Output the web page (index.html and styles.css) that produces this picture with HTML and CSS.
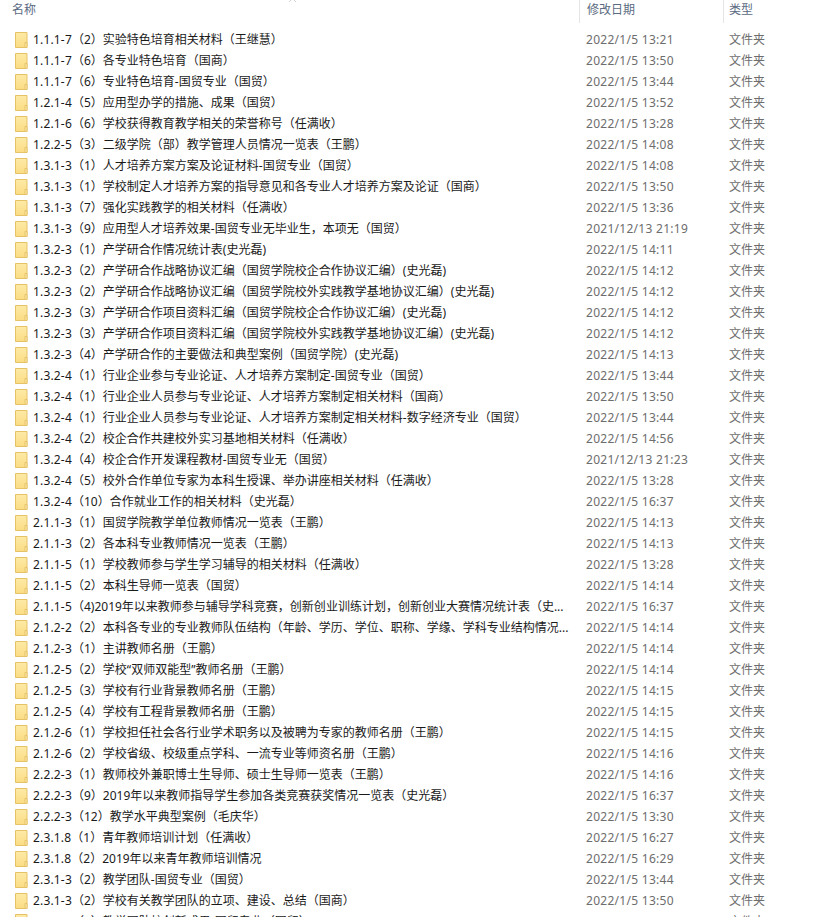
FILE: index.html
```html
<!DOCTYPE html>
<html lang="zh-CN">
<head>
<meta charset="utf-8">
<title>文件列表</title>
<link rel="stylesheet" href="styles.css">
</head>
<body>
<div class="header">
  <div class="col name">名称<svg class="sort" width="9" height="2" viewBox="0 0 9 2"><path d="M1 2L3 0M8 2L6 0" fill="none" stroke="#d0d0d0"/></svg></div>
  <div class="col date">修改日期</div>
  <div class="col type">类型</div>
</div>
<svg width="0" height="0" class="defs"><defs>
  <linearGradient id="fg" x1="0" y1="0" x2="0" y2="1"><stop offset="0" stop-color="#fdeaa6"/><stop offset="1" stop-color="#fbdc84"/></linearGradient>
  <symbol id="folder" viewBox="0 0 13 16">
    <path d="M0.5 0.5H12V15.5H0.5Z" fill="url(#fg)" stroke="#e6c267"/>
    <path d="M10 10.5H12V15.5H10Z" fill="#fdecb0" stroke="#e6c267"/>
  </symbol>
</defs></svg>
<div class="list" id="list"></div>
<script src="rows.js"></script>
</body>
</html>
```
FILE: rows.js
```js
const rows = [
["1.1.1-7","（2）实验特色培育相关材料（王继慧）","2022/1/5 13:21"],
["1.1.1-7","（6）各专业特色培育（国商）","2022/1/5 13:50"],
["1.1.1-7","（6）专业特色培育-国贸专业（国贸）","2022/1/5 13:44"],
["1.2.1-4","（5）应用型办学的措施、成果（国贸）","2022/1/5 13:52"],
["1.2.1-6","（6）学校获得教育教学相关的荣誉称号（任满收）","2022/1/5 13:28"],
["1.2.2-5","（3）二级学院（部）教学管理人员情况一览表（王鹏）","2022/1/5 14:08"],
["1.3.1-3","（1）人才培养方案方案及论证材料-国贸专业（国贸）","2022/1/5 14:08"],
["1.3.1-3","（1）学校制定人才培养方案的指导意见和各专业人才培养方案及论证（国商）","2022/1/5 13:50"],
["1.3.1-3","（7）强化实践教学的相关材料（任满收）","2022/1/5 13:36"],
["1.3.1-3","（9）应用型人才培养效果-国贸专业无毕业生，本项无（国贸）","2021/12/13 21:19"],
["1.3.2-3","（1）产学研合作情况统计表(史光磊)","2022/1/5 14:11"],
["1.3.2-3","（2）产学研合作战略协议汇编（国贸学院校企合作协议汇编）(史光磊)","2022/1/5 14:12"],
["1.3.2-3","（2）产学研合作战略协议汇编（国贸学院校外实践教学基地协议汇编）(史光磊)","2022/1/5 14:12"],
["1.3.2-3","（3）产学研合作项目资料汇编（国贸学院校企合作协议汇编）(史光磊)","2022/1/5 14:12"],
["1.3.2-3","（3）产学研合作项目资料汇编（国贸学院校外实践教学基地协议汇编）(史光磊)","2022/1/5 14:12"],
["1.3.2-3","（4）产学研合作的主要做法和典型案例（国贸学院）(史光磊)","2022/1/5 14:13"],
["1.3.2-4","（1）行业企业参与专业论证、人才培养方案制定-国贸专业（国贸）","2022/1/5 13:44"],
["1.3.2-4","（1）行业企业人员参与专业论证、人才培养方案制定相关材料（国商）","2022/1/5 13:50"],
["1.3.2-4","（1）行业企业人员参与专业论证、人才培养方案制定相关材料-数字经济专业（国贸）","2022/1/5 13:44"],
["1.3.2-4","（2）校企合作共建校外实习基地相关材料（任满收）","2022/1/5 14:56"],
["1.3.2-4","（4）校企合作开发课程教材-国贸专业无（国贸）","2021/12/13 21:23"],
["1.3.2-4","（5）校外合作单位专家为本科生授课、举办讲座相关材料（任满收）","2022/1/5 13:28"],
["1.3.2-4","（10）合作就业工作的相关材料（史光磊）","2022/1/5 16:37"],
["2.1.1-3","（1）国贸学院教学单位教师情况一览表（王鹏）","2022/1/5 14:13"],
["2.1.1-3","（2）各本科专业教师情况一览表（王鹏）","2022/1/5 14:13"],
["2.1.1-5","（1）学校教师参与学生学习辅导的相关材料（任满收）","2022/1/5 13:28"],
["2.1.1-5","（2）本科生导师一览表（国贸）","2022/1/5 14:14"],
["2.1.1-5","（4)2019年以来教师参与辅导学科竞赛，创新创业训练计划，创新创业大赛情况统计表（史...","2022/1/5 16:37"],
["2.1.2-2","（2）本科各专业的专业教师队伍结构（年龄、学历、学位、职称、学缘、学科专业结构情况...","2022/1/5 14:14"],
["2.1.2-3","（1）主讲教师名册（王鹏）","2022/1/5 14:14"],
["2.1.2-5","（2）学校“双师双能型”教师名册（王鹏）","2022/1/5 14:14"],
["2.1.2-5","（3）学校有行业背景教师名册（王鹏）","2022/1/5 14:15"],
["2.1.2-5","（4）学校有工程背景教师名册（王鹏）","2022/1/5 14:15"],
["2.1.2-6","（1）学校担任社会各行业学术职务以及被聘为专家的教师名册（王鹏）","2022/1/5 14:15"],
["2.1.2-6","（2）学校省级、校级重点学科、一流专业等师资名册（王鹏）","2022/1/5 14:16"],
["2.2.2-3","（1）教师校外兼职博士生导师、硕士生导师一览表（王鹏）","2022/1/5 14:16"],
["2.2.2-3","（9）2019年以来教师指导学生参加各类竞赛获奖情况一览表（史光磊）","2022/1/5 16:37"],
["2.2.2-3","（12）教学水平典型案例（毛庆华）","2022/1/5 13:30"],
["2.3.1.8","（1）青年教师培训计划（任满收）","2022/1/5 16:27"],
["2.3.1.8","（2）2019年以来青年教师培训情况","2022/1/5 16:29"],
["2.3.1-3","（2）教学团队-国贸专业（国贸）","2022/1/5 13:44"],
["2.3.1-3","（2）学校有关教学团队的立项、建设、总结（国商）","2022/1/5 13:50"],
["2.3.1-3","（3）教学团队校创新成果-国贸专业（国贸）","2022/1/5 13:44"]
];
const list = document.getElementById("list");
for (const [code, name, date] of rows) {
  const row = document.createElement("div");
  row.className = "row";
  row.innerHTML = `<svg class="icon" width="13" height="16"><use href="#folder"/></svg><span class="fname"><span class="code"></span><span class="rest"></span></span><span class="fdate"></span><span class="ftype">文件夹</span>`;
  row.querySelector(".code").textContent = code;
  row.querySelector(".rest").textContent = name;
  row.querySelector(".fdate").textContent = date;
  list.appendChild(row);
}
```
FILE: styles.css
```css
html, body { margin: 0; padding: 0; height: 917px; overflow: hidden; background: #fff; }
body { font-family: "Noto Sans", "Noto Sans CJK SC", sans-serif; font-size: 12px; color: #1a1a1a; }
.defs { position: absolute; }
.header { display: flex; height: 23px; color: #5b6b82; }
.col { line-height: 20px; }
.name { position: relative; width: 579px; padding-left: 12px; box-sizing: border-box; }
.sort { position: absolute; left: 288px; top: 0; }
.date { width: 144px; padding-left: 7px; box-sizing: border-box; border-left: 1px solid #e5e5e5; }
.type { padding-left: 5px; border-left: 1px solid #e5e5e5; }
.list { padding-top: 6px; }
.row { display: flex; align-items: flex-start; height: 21px; line-height: 21px; white-space: nowrap; }
.icon { margin: 3px 5px 0 15px; flex: none; }
.fname { width: 553px; flex: none; overflow: hidden; }
.code { letter-spacing: 0.17px; }
.fdate { width: 143px; flex: none; color: #6d6d6d; letter-spacing: 0.28px; }
.ftype { color: #6d6d6d; }
```
